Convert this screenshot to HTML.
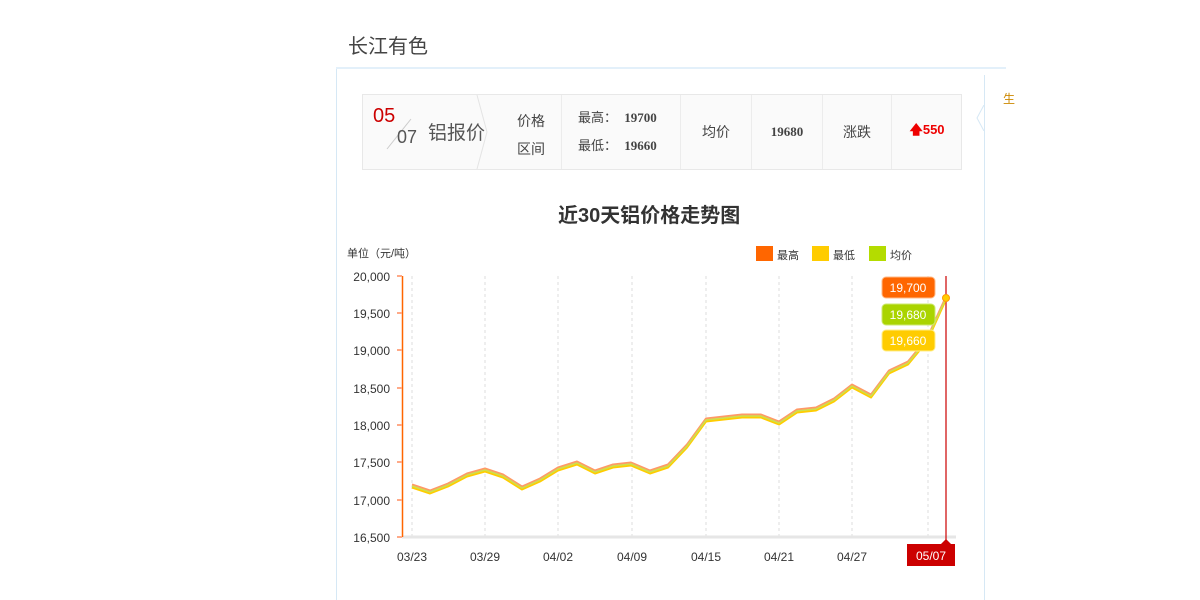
<!DOCTYPE html>
<html><head><meta charset="utf-8"><style>
body{margin:0;width:1200px;height:600px;background:#fff;font-family:"Liberation Sans","Noto Sans CJK SC",sans-serif;position:relative;overflow:hidden}
.a{position:absolute}
.cell{position:absolute;top:0;height:74px;border-left:1px solid #ececec;display:flex;align-items:center;justify-content:center;font-size:14px;color:#444}
</style></head><body>
<div class="a" style="left:348px;top:30px;font-size:20px;color:#444">长江有色</div>
<div class="a" style="left:336px;top:67px;width:670px;height:2px;background:#e3f0fa"></div>
<div class="a" style="left:336px;top:69px;width:1px;height:531px;background:#d6e8f5"></div>
<div class="a" style="left:984px;top:75px;width:1px;height:525px;background:#d6e8f5"></div>
<svg class="a" style="left:974px;top:105px" width="12" height="26"><path d="M10 0 L3 13 L10 26" fill="#fff" stroke="#d6e8f5" stroke-width="1"/></svg>
<div class="a" style="left:1003px;top:90px;font-size:12px;color:#c80">生</div>
<div class="a" style="left:362px;top:94px;width:598px;height:74px;background:#fafafa;border:1px solid #e8e8e8">
 <div class="a" style="left:10px;top:10px;font-size:20px;color:#c00">05</div>
 <svg class="a" style="left:20px;top:20px" width="30" height="40"><line x1="28" y1="4" x2="4" y2="34" stroke="#ccc"/></svg>
 <div class="a" style="left:34px;top:32px;font-size:18px;color:#555">07</div>
 <div class="a" style="left:65px;top:23px;font-size:19px;color:#555">铝报价</div>
 <svg class="a" style="left:112px;top:0" width="20" height="74"><path d="M2 0 L12 37 L2 74" fill="none" stroke="#e4e4e4"/></svg>
 <div class="a" style="left:154px;top:12px;font-size:14px;color:#444;line-height:28px">价格<br>区间</div>
 <div class="cell" style="left:198px;width:118px;flex-direction:column;align-items:flex-start;padding-left:16px;box-sizing:border-box;line-height:28px;font-size:13px"><div>最高：&nbsp;&nbsp;<b style="font-family:'Liberation Serif',serif;font-size:13px">19700</b></div><div>最低：&nbsp;&nbsp;<b style="font-family:'Liberation Serif',serif;font-size:13px">19660</b></div></div>
 <div class="cell" style="left:317px;width:70px">均价</div>
 <div class="cell" style="left:388px;width:70px;font-family:'Liberation Serif',serif;font-weight:bold;font-size:13px">19680</div>
 <div class="cell" style="left:459px;width:68px">涨跌</div>
 <div class="cell" style="left:528px;width:70px;color:#e00;font-weight:bold;font-size:13px">🡅550</div>
</div>
<div class="a" style="left:558px;top:199px;font-size:20px;font-weight:bold;color:#333">近30天铝价格走势图</div>
<div class="a" style="left:347px;top:245px;font-size:11px;color:#333">单位（元/吨）</div>
<div class="a" style="left:756px;top:246px;width:17px;height:15px;background:#f60"></div>
<div class="a" style="left:777px;top:247px;font-size:11px;color:#333">最高</div>
<div class="a" style="left:812px;top:246px;width:17px;height:15px;background:#fc0"></div>
<div class="a" style="left:833px;top:247px;font-size:11px;color:#333">最低</div>
<div class="a" style="left:869px;top:246px;width:17px;height:15px;background:#b4dc00"></div>
<div class="a" style="left:890px;top:247px;font-size:11px;color:#333">均价</div>
<svg class="a" style="left:0;top:0" width="1200" height="600" font-family="Liberation Sans, sans-serif" font-size="12" fill="#333">
<g stroke="#ddd" stroke-dasharray="3,3">
<line x1="412" y1="276" x2="412" y2="537"/><line x1="485" y1="276" x2="485" y2="537"/><line x1="558" y1="276" x2="558" y2="537"/><line x1="632" y1="276" x2="632" y2="537"/><line x1="706" y1="276" x2="706" y2="537"/><line x1="779" y1="276" x2="779" y2="537"/><line x1="852" y1="276" x2="852" y2="537"/><line x1="928" y1="276" x2="928" y2="537"/></g>
<line x1="402" y1="537" x2="956" y2="537" stroke="#e6e6e6" stroke-width="3"/>
<line x1="402.5" y1="276" x2="402.5" y2="537" stroke="#f60" stroke-width="1.5"/>
<g stroke="#fa8" stroke-width="2"><line x1="397" y1="276" x2="402" y2="276"/><line x1="397" y1="313" x2="402" y2="313"/><line x1="397" y1="350" x2="402" y2="350"/><line x1="397" y1="388" x2="402" y2="388"/><line x1="397" y1="425" x2="402" y2="425"/><line x1="397" y1="462" x2="402" y2="462"/><line x1="397" y1="500" x2="402" y2="500"/><line x1="397" y1="537" x2="402" y2="537"/></g>
<g text-anchor="end"><text x="390" y="281">20,000</text><text x="390" y="318">19,500</text><text x="390" y="355">19,000</text><text x="390" y="393">18,500</text><text x="390" y="430">18,000</text><text x="390" y="467">17,500</text><text x="390" y="505">17,000</text><text x="390" y="542">16,500</text></g>
<g text-anchor="middle"><text x="412" y="561">03/23</text><text x="485" y="561">03/29</text><text x="558" y="561">04/02</text><text x="632" y="561">04/09</text><text x="706" y="561">04/15</text><text x="779" y="561">04/21</text><text x="852" y="561">04/27</text></g>
<line x1="946" y1="276" x2="946" y2="543" stroke="#c00" stroke-width="1.2"/>
<g fill="none" stroke-linejoin="round">
<polyline transform="translate(0,-1.5)" stroke="#f96" stroke-width="2" points="412,486 430,492 448,485 467,475 485,470 503,476 522,488 540,480 558,469 577,463 595,472 613,466 631,464 650,472 668,466 687,446 706,420 724,418 742,416 761,416 779,423 797,411 816,409 834,400 852,386 871,396 889,372 908,363 927,340 946,298"/>
<polyline transform="translate(0,1.5)" stroke="#fc0" stroke-width="2" points="412,486 430,492 448,485 467,475 485,470 503,476 522,488 540,480 558,469 577,463 595,472 613,466 631,464 650,472 668,466 687,446 706,420 724,418 742,416 761,416 779,423 797,411 816,409 834,400 852,386 871,396 889,372 908,363 927,340 946,298"/>
<polyline stroke="#cde050" stroke-width="1.5" points="412,486 430,492 448,485 467,475 485,470 503,476 522,488 540,480 558,469 577,463 595,472 613,466 631,464 650,472 668,466 687,446 706,420 724,418 742,416 761,416 779,423 797,411 816,409 834,400 852,386 871,396 889,372 908,363 927,340 946,298"/>
</g>
<circle cx="946" cy="298" r="3.5" fill="#fc0" stroke="#f90"/>
<g font-size="12" text-anchor="middle" fill="#fff">
<rect x="882" y="277" width="53" height="21" rx="4" fill="#f60" stroke="#fb8"/><text x="908" y="292">19,700</text>
<rect x="882" y="304" width="53" height="21" rx="4" fill="#aad400" stroke="#cde870"/><text x="908" y="319">19,680</text>
<rect x="882" y="330" width="53" height="21" rx="4" fill="#fc0" stroke="#fe8"/><text x="908" y="345">19,660</text>
<rect x="907" y="544" width="48" height="22" fill="#c00"/><path d="M941 544 L946 539 L951 544Z" fill="#c00"/><text x="931" y="560">05/07</text>
</g>
</svg>
</body></html>
